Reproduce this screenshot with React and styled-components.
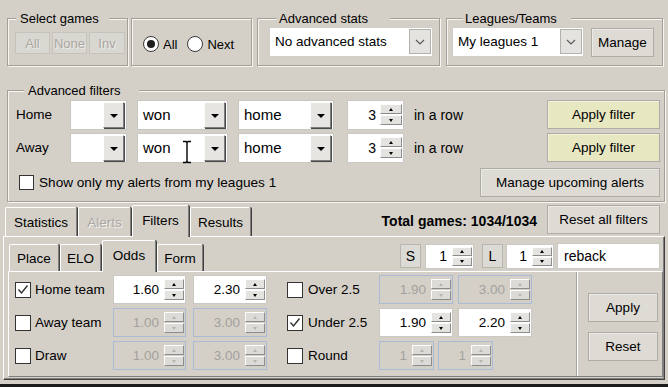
import React from 'react';
import styled, { createGlobalStyle } from 'styled-components';

const GlobalStyle = createGlobalStyle`
  html, body { margin: 0; padding: 0; background: #d4d0c8; }
  body {
    font-family: "Liberation Sans", Arial, sans-serif;
    font-size: 13px;
    color: #000;
  }
  * { box-sizing: border-box; }
`;

const Window = styled.div`
  position: relative;
  width: 668px;
  height: 387px;
  overflow: hidden;
  background: #d4d0c8;
  display: flex;
  flex-direction: column;
`;

const TopRow = styled.div`
  display: flex;
  align-items: flex-end;
  padding: 11px 0 0 7px;
`;

const Group = styled.fieldset`
  margin: 0 0 0 ${p => p.$ml || 0}px;
  padding: 0;
  width: ${p => p.$w}px;
  height: ${p => p.$h}px;
  min-width: 0;
  border: 1px solid #a3a099;
  box-shadow: 1px 1px 0 #f6f5f2, inset 1px 1px 0 #f6f5f2;
`;

const Caption = styled.legend`
  margin-left: ${p => p.$left}px;
  padding: 0 ${p => p.$right}px 0 ${p => p.$padl}px;
  font-size: 13px;
  line-height: 15px;
  background: #d4d0c8;
`;

const GroupBody = styled.div`
  display: flex;
  align-items: ${p => p.$align || 'flex-start'};
  padding: ${p => p.$pad};
  height: ${p => (p.$fill ? '100%' : 'auto')};
`;

const SmallBtn = styled.div`
  width: ${p => p.$w}px;
  height: 22px;
  margin-right: 2px;
  display: flex;
  align-items: center;
  justify-content: center;
  background: #d9d7d2;
  border: 1px solid #c6c3bd;
  color: #a9a7a2;
  text-shadow: 1px 1px 0 #eeece8;
`;

const RadioItem = styled.label`
  display: flex;
  align-items: center;
  margin-right: 10px;
`;

const RadioCircle = styled.span`
  width: 16px;
  height: 16px;
  border-radius: 50%;
  border: 1.5px solid #3a3a3a;
  background: #fff;
  margin-right: 4px;
  display: flex;
  align-items: center;
  justify-content: center;
  &::after {
    content: '';
    width: 8px;
    height: 8px;
    border-radius: 50%;
    background: ${p => (p.$on ? '#1e1e1e' : 'transparent')};
  }
`;

const FlatCombo = styled.div`
  width: ${p => p.$w}px;
  height: 30px;
  background: #fff;
  border: 1px solid #cfcdc8;
  padding: 1px 1px 2px 1px;
  display: flex;
  align-items: stretch;
`;

const FlatComboText = styled.span`
  flex: 1;
  display: flex;
  align-items: center;
  padding-left: 4px;
  font-size: 13.5px;
  white-space: nowrap;
`;

const FlatDrop = styled.span`
  width: 22px;
  background: #e4e3e0;
  border: 1px solid #b3b1ac;
  display: flex;
  align-items: center;
  justify-content: center;
`;

const Button = styled.div`
  width: ${p => p.$w}px;
  height: ${p => p.$h || 29}px;
  margin: ${p => p.$m || 0};
  align-self: ${p => p.$self || 'auto'};
  display: flex;
  align-items: center;
  justify-content: center;
  background: ${p => (p.$tint ? '#e7e7c2' : '#dedbd5')};
  border: 1px solid #aeaca6;
  box-shadow: inset 1px 1px 0 ${p => (p.$tint ? '#f2f2da' : '#eceae6')};
  font-size: 13.5px;
  white-space: nowrap;
  flex: none;
`;

const FilterGroup = styled(Group)`
  margin: 17px 0 0 7px;
`;

const FilterBody = styled.div`
  padding: 1px 4px 0 8px;
`;

const FilterRow = styled.div`
  display: flex;
  align-items: center;
  height: ${p => p.$h || 31}px;
  margin-top: ${p => p.$mt || 0}px;
`;

const RowLabel = styled.span`
  width: 54px;
  flex: none;
  font-size: 13.5px;
`;

const Combo = styled.div`
  width: ${p => p.$w}px;
  height: 30px;
  margin-right: ${p => p.$mr || 0}px;
  flex: none;
  background: #fff;
  border: 1px solid #c9c7c2;
  padding: 1px 2px 1px 1px;
  display: flex;
  align-items: stretch;
`;

const ComboText = styled.span`
  flex: 1;
  display: flex;
  align-items: center;
  padding-left: 4px;
  font-size: 15px;
`;

const DropBtn = styled.span`
  width: 21px;
  background: #e6e5e2;
  border: 1px solid;
  border-color: #fdfdfd #7c7c7c #7c7c7c #fdfdfd;
  box-shadow: 1px 1px 0 #4a4a4a;
  display: flex;
  align-items: center;
  justify-content: center;
  padding-top: 2px;
`;

const Tri = styled.span`
  width: 0;
  height: 0;
  border-left: ${p => p.$s}px solid transparent;
  border-right: ${p => p.$s}px solid transparent;
  ${p =>
    p.$up
      ? `border-bottom: ${p.$h}px solid ${p.$c || '#000'};`
      : `border-top: ${p.$h}px solid ${p.$c || '#000'};`}
`;

const Spin = styled.div`
  width: ${p => p.$w}px;
  height: ${p => p.$h || 29}px;
  margin-right: ${p => p.$mr || 0}px;
  flex: none;
  display: flex;
  align-items: center;
  background: ${p => (p.$off ? '#d4d0c8' : '#fff')};
  border: 1px solid ${p => (p.$off ? '#a9bbd5' : '#cbc9c4')};
  color: ${p => (p.$off ? '#a3a19c' : '#000')};
  font-size: ${p => p.$fs || 14}px;
`;

const SpinValue = styled.span`
  flex: 1;
  text-align: right;
  padding-right: ${p => p.$pr || 4}px;
`;

const SpinBtns = styled.div`
  width: ${p => p.$bw || 20}px;
  height: ${p => p.$bh || 21}px;
  margin-right: 1px;
  display: flex;
  flex-direction: column;
  gap: 1px;
`;

const SpinBtn = styled.div`
  flex: 1;
  display: flex;
  align-items: center;
  justify-content: center;
  background: ${p => (p.$off ? '#dddbd7' : '#e4e3e0')};
  border: 1px solid;
  border-color: #fdfdfd #8c8c8c #8c8c8c #fdfdfd;
`;

const RowText = styled.span`
  font-size: 14px;
  white-space: nowrap;
`;

const Spacer = styled.span`
  flex: 1;
`;

const CheckLabel = styled.label`
  display: flex;
  align-items: center;
  margin-left: ${p => p.$ml || 0}px;
  font-size: ${p => p.$fs || 13}px;
  white-space: nowrap;
`;

const CheckBox = styled.span`
  width: ${p => p.$size || 16}px;
  height: ${p => p.$size || 16}px;
  flex: none;
  margin-right: ${p => p.$gap || 4}px;
  background: #fff;
  border: 1px solid #333;
  display: flex;
  align-items: center;
  justify-content: center;
`;

const TabsBox = styled.div`
  margin: 3px 3px 0 3px;
`;

const TabStrip = styled.div`
  display: flex;
  align-items: flex-end;
  height: 31px;
  padding: ${p => p.$pad};
`;

const Tab = styled.div`
  position: relative;
  width: ${p => p.$w}px;
  height: ${p => (p.$active ? p.$tall + 1 : p.$short)}px;
  margin: 0 1px ${p => (p.$active ? -1 : 0)}px 0;
  z-index: ${p => (p.$active ? 2 : 0)};
  flex: none;
  display: flex;
  align-items: center;
  justify-content: center;
  padding-bottom: ${p => (p.$active ? 2 : 0)}px;
  background: #d4d0c8;
  border-top: 1px solid #fff;
  border-left: 1px solid #fff;
  border-right: 1px solid #808080;
  box-shadow: 1px 0 0 #404040;
  border-radius: 2px 2px 0 0;
  color: ${p => (p.$disabled ? '#aaa8a2' : '#000')};
  text-shadow: ${p => (p.$disabled ? '1px 1px 0 #f4f3f0' : 'none')};
  font-size: 13.5px;
`;

const TotalText = styled.span`
  align-self: center;
  margin: 0 10px 0 auto;
  font-weight: bold;
  font-size: 14px;
`;

const Panel = styled.div`
  position: relative;
  z-index: 1;
  height: 144px;
  padding: 3px 1px 2px 4px;
  border: 1px solid;
  border-color: #fff #404040 #404040 #fff;
  box-shadow: inset -1px -1px 0 #808080;
`;

const Flag = styled.div`
  width: 21px;
  height: 24px;
  flex: none;
  margin: 0 ${p => p.$mr}px 0 ${p => p.$ml || 0}px;
  display: flex;
  align-items: center;
  justify-content: center;
  background: #dcdad4;
  border: 1px solid #b8b6b0;
  font-size: 14px;
`;

const TextBox = styled.div`
  width: 103px;
  height: 26px;
  flex: none;
  display: flex;
  align-items: center;
  padding-left: 6px;
  background: #fff;
  border: 1px solid #cbc9c4;
  font-size: 14px;
`;

const ControlsRight = styled.div`
  display: flex;
  align-items: center;
  align-self: center;
  margin-left: auto;
  margin-right: 3px;
  padding-top: 1px;
`;

const InnerPanel = styled.div`
  position: relative;
  z-index: 1;
  height: 106px;
  display: flex;
  border: 1px solid;
  border-color: #fff #808080 #808080 #fff;
`;

const OddsGrid = styled.div`
  width: 568px;
  flex: none;
  display: grid;
  grid-template-columns: 98px 80px 94px 92px 79px 74px;
  grid-auto-rows: 29px;
  row-gap: 4px;
  align-items: center;
  padding: 3px 0 0 6px;
`;

const Cell = styled.div`
  display: flex;
  align-items: center;
  gap: 4px;
  grid-column: ${p => p.$span || 'auto'};
`;

const Side = styled.div`
  flex: 1;
  display: flex;
  flex-direction: column;
  align-items: flex-start;
  gap: 10px;
  padding: 21px 0 0 10px;
  border-left: 1px solid #fff;
  box-shadow: -1px 0 0 #a7a49d;
`;

const BottomEdge = styled.div`
  margin-top: 4px;
  height: 3px;
  background: #1b1b1b;
`;

const Cursor = styled.svg`
  position: absolute;
  left: 182px;
  top: 140px;
`;

function Chevron() {
  return (
    <svg width="10" height="6" viewBox="0 0 10 6">
      <polyline points="1,1 5,5 9,1" fill="none" stroke="#5a5a5a" strokeWidth="1.2" />
    </svg>
  );
}

function Check() {
  return (
    <svg width="12" height="11" viewBox="0 0 12 11">
      <polyline points="1.5,5.5 4.5,9 10.5,1.5" fill="none" stroke="#2a2a2a" strokeWidth="1.3" />
    </svg>
  );
}

function Checkbox({ on, label, size, gap, ml, fs }) {
  return (
    <CheckLabel $ml={ml} $fs={fs}>
      <CheckBox $size={size} $gap={gap}>{on && <Check />}</CheckBox>
      {label}
    </CheckLabel>
  );
}

function ClassicCombo({ w, mr, text }) {
  return (
    <Combo $w={w} $mr={mr}>
      <ComboText>{text}</ComboText>
      <DropBtn>
        <Tri $s={4} $h={4} />
      </DropBtn>
    </Combo>
  );
}

function SpinBox({ w, h, mr, value, off, bw, bh, fs, pr }) {
  const arrow = off ? '#b6b4ae' : '#000';
  return (
    <Spin $w={w} $h={h} $mr={mr} $off={off} $fs={fs}>
      <SpinValue $pr={pr}>{value}</SpinValue>
      <SpinBtns $bw={bw} $bh={bh}>
        <SpinBtn $off={off}>
          <Tri $up $s={2.5} $h={3} $c={arrow} />
        </SpinBtn>
        <SpinBtn $off={off}>
          <Tri $s={2.5} $h={3} $c={arrow} />
        </SpinBtn>
      </SpinBtns>
    </Spin>
  );
}

const odds = [
  { label: 'Home team', on: true, a: '1.60', b: '2.30', off: false, label2: 'Over 2.5', on2: false, c: '1.90', d: '3.00', off2: true },
  { label: 'Away team', on: false, a: '1.00', b: '3.00', off: true, label2: 'Under 2.5', on2: true, c: '1.90', d: '2.20', off2: false },
];

export default function App() {
  return (
    <Window>
      <GlobalStyle />
      <TopRow>
        <Group $w={121} $h={55}>
          <Caption $left={8} $padl={4} $right={10}>Select games</Caption>
          <GroupBody $pad="6px 0 0 7px">
            <SmallBtn $w={35}>All</SmallBtn>
            <SmallBtn $w={35}>None</SmallBtn>
            <SmallBtn $w={36}>Inv</SmallBtn>
          </GroupBody>
        </Group>
        <Group $w={121} $h={48} $ml={3}>
          <GroupBody $pad="4px 0 0 11px" $align="center" $fill>
            <RadioItem>
              <RadioCircle $on />
              All
            </RadioItem>
            <RadioItem>
              <RadioCircle />
              Next
            </RadioItem>
          </GroupBody>
        </Group>
        <Group $w={183} $h={55} $ml={5}>
          <Caption $left={18} $padl={3} $right={22}>Advanced stats</Caption>
          <GroupBody $pad="1px 0 0 11px">
            <FlatCombo $w={164}>
              <FlatComboText>No advanced stats</FlatComboText>
              <FlatDrop>
                <Chevron />
              </FlatDrop>
            </FlatCombo>
          </GroupBody>
        </Group>
        <Group $w={217} $h={55} $ml={6}>
          <Caption $left={16} $padl={2} $right={14}>Leagues/Teams</Caption>
          <GroupBody $pad="1px 0 0 5px">
            <FlatCombo $w={132}>
              <FlatComboText>My leagues 1</FlatComboText>
              <FlatDrop>
                <Chevron />
              </FlatDrop>
            </FlatCombo>
            <Button $w={63} $h={29} $m="1px 0 0 7px">Manage</Button>
          </GroupBody>
        </Group>
      </TopRow>

      <FilterGroup $w={658} $h={122}>
        <Caption $left={16} $padl={4} $right={18}>Advanced filters</Caption>
        <FilterBody>
          {['Home', 'Away'].map((side, i) => (
            <FilterRow key={side} $mt={i ? 2 : 0}>
              <RowLabel>{side}</RowLabel>
              <ClassicCombo w={57} mr={10} text="" />
              <ClassicCombo w={91} mr={10} text="won" />
              <ClassicCombo w={96} mr={13} text="home" />
              <SpinBox w={57} h={30} mr={10} value="3" bw={22} pr={4} />
              <RowText>in a row</RowText>
              <Spacer />
              <Button $w={113} $h={29} $tint>Apply filter</Button>
            </FilterRow>
          ))}
          <FilterRow $mt={4} $h={30}>
            <Checkbox label="Show only my alerts from my leagues 1" size={15} gap={5} ml={3} fs={13.6} />
            <Spacer />
            <Button $w={180} $h={29}>Manage upcoming alerts</Button>
          </FilterRow>
        </FilterBody>
      </FilterGroup>

      <TabsBox>
        <TabStrip $pad="0 5px 0 2px">
          <Tab $w={72} $short={29}>Statistics</Tab>
          <Tab $w={53} $short={29} $disabled>Alerts</Tab>
          <Tab $w={57} $short={29} $tall={31} $active>Filters</Tab>
          <Tab $w={61} $short={29}>Results</Tab>
          <TotalText>Total games: 1034/1034</TotalText>
          <Button $w={113} $h={29} $self="flex-start">Reset all filters</Button>
        </TabStrip>
        <Panel>
          <TabStrip $pad="0 0 0 1px">
            <Tab $w={50} $short={27}>Place</Tab>
            <Tab $w={41} $short={27}>ELO</Tab>
            <Tab $w={54} $short={27} $tall={31} $active>Odds</Tab>
            <Tab $w={46} $short={27}>Form</Tab>
            <ControlsRight>
              <Flag $mr={4}>S</Flag>
              <SpinBox w={49} h={25} mr={8} value="1" bw={20} bh={19} pr={5} />
              <Flag $mr={3}>L</Flag>
              <SpinBox w={48} h={25} mr={3} value="1" bw={20} bh={19} pr={5} />
              <TextBox>reback</TextBox>
            </ControlsRight>
          </TabStrip>
          <InnerPanel>
            <OddsGrid>
              {odds.map(r => (
                <React.Fragment key={r.label}>
                  <Cell><Checkbox on={r.on} label={r.label} size={16} gap={4} fs={13.5} /></Cell>
                  <Cell><SpinBox w={73} value={r.a} off={r.off} pr={5} fs={13.5} /></Cell>
                  <Cell><SpinBox w={74} value={r.b} off={r.off} pr={5} fs={13.5} /></Cell>
                  <Cell><Checkbox on={r.on2} label={r.label2} size={16} gap={5} fs={13.5} /></Cell>
                  <Cell><SpinBox w={74} value={r.c} off={r.off2} pr={5} fs={13.5} /></Cell>
                  <Cell><SpinBox w={74} value={r.d} off={r.off2} pr={5} fs={13.5} /></Cell>
                </React.Fragment>
              ))}
              <Cell><Checkbox label="Draw" size={16} gap={4} fs={13.5} /></Cell>
              <Cell><SpinBox w={73} value="1.00" off pr={5} fs={13.5} /></Cell>
              <Cell><SpinBox w={74} value="3.00" off pr={5} fs={13.5} /></Cell>
              <Cell><Checkbox label="Round" size={16} gap={5} fs={13.5} /></Cell>
              <Cell $span="5 / span 2">
                <SpinBox w={55} value="1" off pr={5} fs={13.5} />
                <SpinBox w={55} value="1" off pr={5} fs={13.5} />
              </Cell>
            </OddsGrid>
            <Side>
              <Button $w={70} $h={29}>Apply</Button>
              <Button $w={70} $h={29}>Reset</Button>
            </Side>
          </InnerPanel>
        </Panel>
      </TabsBox>
      <BottomEdge />

      <Cursor width="10" height="24" viewBox="0 0 10 24">
        <path d="M1 1.5h3l1 1 1-1h3M5 2.5v19M1 22.5h3l1-1 1 1h3" fill="none" stroke="#000" strokeWidth="1.4" />
      </Cursor>
    </Window>
  );
}
